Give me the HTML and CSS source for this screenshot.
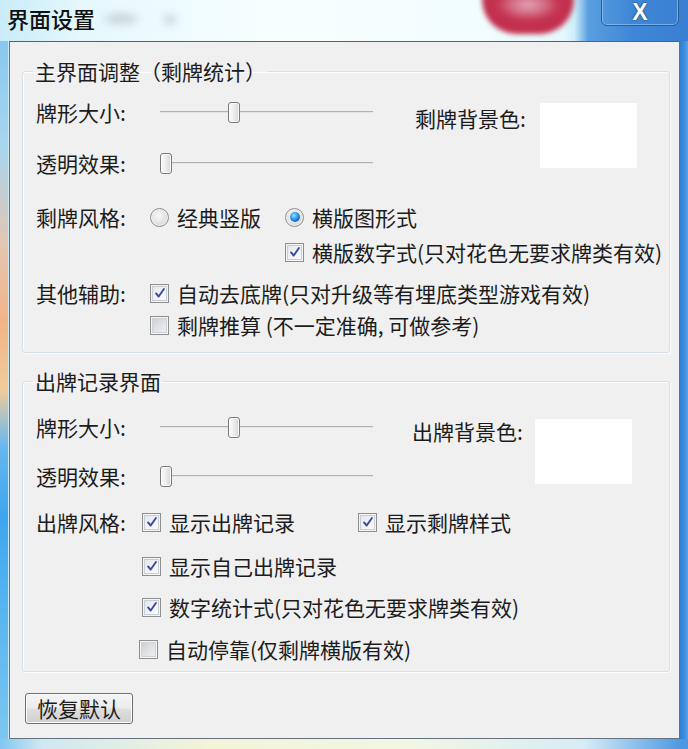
FILE: index.html
```html
<!DOCTYPE html>
<html lang="zh-CN">
<head>
<meta charset="utf-8">
<title>界面设置</title>
<link rel="stylesheet" href="styles.css">
</head>
<body>
<div class="window">
  <div class="titlebar">
    <span class="title">界面设置</span>
    <span class="smudge smudge-a"></span>
    <span class="smudge smudge-b"></span>
    <span class="red-btn"></span>
    <span class="close-btn"><span class="close-x">X</span></span>
  </div>
  <div class="frame">
    <div class="edge-left"></div>
    <div class="client">
      <fieldset class="group group-main">
        <legend>主界面调整（剩牌统计）</legend>
        <div class="top top-main">
          <div class="sliders">
            <div class="slider-row">
              <span class="lbl">牌形大小:</span>
              <div class="slider"><span class="thumb" style="left:68px"></span></div>
            </div>
            <div class="slider-row">
              <span class="lbl">透明效果:</span>
              <div class="slider"><span class="thumb" style="left:0px"></span></div>
            </div>
          </div>
          <span class="bg-lbl">剩牌背景色:</span>
          <div class="swatch"></div>
        </div>
        <div class="opts opts-main">
          <span class="opt-lbl r1">剩牌风格:</span>
          <div class="style-grid r1">
            <span class="opt"><span class="rb"></span>经典竖版</span>
            <span class="opt"><span class="rb rb-on"></span>横版图形式</span>
            <span class="opt sub"><span class="cb"><svg viewBox="0 0 16 16" class="tick"><path d="M3.5 8.5 L6.5 12 L12.5 3.5"/></svg></span>横版数字式(只对花色无要求牌类有效)</span>
          </div>
          <span class="opt-lbl r3">其他辅助:</span>
          <span class="opt col2 r3"><span class="cb"><svg viewBox="0 0 16 16" class="tick"><path d="M3.5 8.5 L6.5 12 L12.5 3.5"/></svg></span>自动去底牌(只对升级等有埋底类型游戏有效)</span>
          <span class="opt col2 r4"><span class="cb cb-off"></span>剩牌推算 (不一定准确, 可做参考)</span>
        </div>
      </fieldset>

      <fieldset class="group group-record">
        <legend>出牌记录界面</legend>
        <div class="top top-record">
          <div class="sliders">
            <div class="slider-row">
              <span class="lbl">牌形大小:</span>
              <div class="slider"><span class="thumb" style="left:68px"></span></div>
            </div>
            <div class="slider-row">
              <span class="lbl">透明效果:</span>
              <div class="slider"><span class="thumb" style="left:0px"></span></div>
            </div>
          </div>
          <span class="bg-lbl">出牌背景色:</span>
          <div class="swatch"></div>
        </div>
        <div class="opts opts-record">
          <span class="opt-lbl r1">出牌风格:</span>
          <div class="pair col2 r1">
            <span class="opt"><span class="cb"><svg viewBox="0 0 16 16" class="tick"><path d="M3.5 8.5 L6.5 12 L12.5 3.5"/></svg></span>显示出牌记录</span>
            <span class="opt"><span class="cb"><svg viewBox="0 0 16 16" class="tick"><path d="M3.5 8.5 L6.5 12 L12.5 3.5"/></svg></span>显示剩牌样式</span>
          </div>
          <span class="opt col2 r2"><span class="cb"><svg viewBox="0 0 16 16" class="tick"><path d="M3.5 8.5 L6.5 12 L12.5 3.5"/></svg></span>显示自己出牌记录</span>
          <span class="opt col2 r3"><span class="cb"><svg viewBox="0 0 16 16" class="tick"><path d="M3.5 8.5 L6.5 12 L12.5 3.5"/></svg></span>数字统计式(只对花色无要求牌类有效)</span>
          <span class="opt col2 r4 shift"><span class="cb cb-off"></span>自动停靠(仅剩牌横版有效)</span>
        </div>
      </fieldset>

      <button class="btn">恢复默认</button>
    </div>
    <div class="edge-right"></div>
  </div>
  <div class="edge-bottom"></div>
</div>
</body>
</html>
```

FILE: styles.css
```css
html, body {
  margin: 0;
  padding: 0;
}
body {
  width: 688px;
  height: 749px;
  overflow: hidden;
  font-family: "Noto Sans CJK SC", "Noto Sans", sans-serif;
  font-size: 21px;
  color: #1c1c1c;
}
.window {
  width: 688px;
  height: 749px;
  display: flex;
  flex-direction: column;
}

/* title bar */
.titlebar {
  position: relative;
  height: 41px;
  flex: none;
  overflow: hidden;
  background: linear-gradient(to right, #c9ecf8 0%, #e6f8fd 12%, #f7feff 40%, #f2fdff 70%, #e4f8fe 82%, #cdeefa 83.5%, #5a9fe0 85.5%, #3f86d6 92%, #3a80d2 100%);
}
.title {
  position: absolute;
  left: 7px;
  top: 4px;
  font-size: 22px;
  line-height: 28px;
  font-weight: 500;
  color: #111;
}
.smudge {
  position: absolute;
  border-radius: 50%;
  background: #a9b3bb;
  filter: blur(4px);
  opacity: 0.55;
}
.smudge-a { left: 104px; top: 14px; width: 34px; height: 10px; }
.smudge-b { left: 163px; top: 15px; width: 14px; height: 9px; }
.red-btn {
  position: absolute;
  left: 482px;
  top: -8px;
  width: 92px;
  height: 42px;
  border-radius: 10px 10px 46px 46px;
  background: radial-gradient(ellipse 40% 45% at 50% 30%, #e2a2b2 0%, #d47088 45%, #c63a56 80%, #c2304e 100%);
  filter: blur(2.5px);
}
.close-btn {
  position: absolute;
  left: 601px;
  top: -5px;
  width: 78px;
  height: 31px;
  box-sizing: border-box;
  border: 1px solid #2c5c98;
  border-radius: 6px;
  box-shadow: inset 0 0 0 1px rgba(190, 225, 255, 0.45);
  display: flex;
  justify-content: center;
  align-items: center;
}
.close-x {
  font-family: "Liberation Sans", sans-serif;
  font-weight: bold;
  font-size: 23px;
  line-height: 22px;
  color: #fff;
  margin-top: 3px;
  text-shadow: 0 0 2px #1d3f70, 0 0 1px #1d3f70;
}

/* frame */
.frame {
  display: flex;
  flex: none;
  height: 698px;
}
.edge-left {
  width: 9px;
  background: linear-gradient(to bottom, #86c8ee 0%, #a8d6ee 15%, #e6c4ae 30%, #f2b486 40%, #f0cc9a 50%, #68b8ee 58%, #3ea6ee 68%, #58b6ee 82%, #7ec6f0 100%);
  box-shadow: inset -1px 0 0 #c8e6f6;
}
.edge-right {
  width: 8px;
  background: linear-gradient(to right, #2f7fd2, #3f90e0 60%, #5aa2e6);
}
.edge-bottom {
  height: 10px;
  background: linear-gradient(to right, #7ec6f0 0%, #cfe8f2 6%, #f3f4d8 30%, #f2f6e4 60%, #d6ecf6 85%, #4c98e2 99%);
}
.client {
  width: 671px;
  height: 698px;
  box-sizing: border-box;
  border: 1px solid #66737f;
  border-top-color: #55616d;
  background: #f0f0f0;
  padding: 17px 9px 0 12px;
}

/* group boxes */
.group {
  margin: 0;
  border: 1px solid #d5dfe5;
  border-radius: 3px;
  padding: 0 0 14px 13px;
  box-shadow: inset 1px 1px 0 #fbfbfb, 1px 1px 0 #fbfbfb;
  min-width: 0;
}
.group legend {
  padding: 0 2px;
  margin-left: -3px;
  line-height: 24px;
  height: 24px;
}
.group-record {
  margin-top: 16px;
  padding-bottom: 9px;
}

.lbl, .opt-lbl, .bg-lbl {
  line-height: 26px;
  height: 26px;
  white-space: nowrap;
}

/* slider section */
.top {
  display: flex;
  align-items: flex-start;
}
.top-main { margin-top: 16px; }
.top-record { margin-top: 21px; }
.sliders {
  display: flex;
  flex-direction: column;
}
.slider-row {
  display: flex;
  align-items: center;
  height: 26px;
}
.slider-row + .slider-row { margin-top: 25px; }
.top-record .slider-row + .slider-row { margin-top: 23px; }
.slider-row .lbl { width: 124px; }
.slider {
  position: relative;
  width: 213px;
  height: 26px;
}
.slider::before {
  content: "";
  position: absolute;
  left: 0;
  right: 0;
  top: 12px;
  height: 1px;
  background: #e4e4e4;
  border-top: 1px solid #b2b2b2;
}
.thumb {
  position: absolute;
  top: 3px;
  width: 12px;
  height: 21px;
  box-sizing: border-box;
  border: 1px solid #777b80;
  border-radius: 3px;
  background: linear-gradient(to right, #fdfdfd 0%, #ececec 50%, #d6d6d6 100%);
  box-shadow: inset 0 0 0 1px #fafafa;
}
.bg-lbl {
  margin-left: 42px;
  margin-top: 6px;
}
.swatch {
  width: 97px;
  height: 65px;
  background: #fff;
  margin-left: 14px;
  margin-top: 4px;
}
.top-record .bg-lbl {
  margin-left: 39px;
  margin-top: 4px;
}
.top-record .swatch {
  margin-left: 12px;
  margin-top: 5px;
}

/* options */
.opts {
  display: grid;
  align-items: start;
  justify-content: start;
}
.opts-main {
  margin-top: 28px;
  grid-template-columns: 114px auto;
  grid-template-rows: 35px 41px 32px 26px;
}
.opts-record {
  margin-top: 20px;
  grid-template-columns: 106px auto;
  grid-template-rows: 44px 41px 42px 26px;
}
.opt-lbl { grid-column: 1; }
.col2 { grid-column: 2; }
.r1 { grid-row: 1; }
.r2 { grid-row: 2; }
.r3 { grid-row: 3; }
.r4 { grid-row: 4; }
.style-grid {
  grid-column: 2;
  grid-row: 1 / span 2;
  display: grid;
  grid-template-columns: auto auto;
  grid-template-rows: 35px 26px;
  justify-content: start;
  align-items: start;
  column-gap: 24px;
}
.style-grid .sub { grid-column: 2; }
.pair {
  display: grid;
  grid-template-columns: 216px auto;
  align-items: start;
}
.opt {
  display: flex;
  align-items: center;
  height: 26px;
  line-height: 26px;
  gap: 8px;
  white-space: nowrap;
}
.shift { margin-left: -3px; }

/* checkbox */
.cb {
  flex: none;
  width: 19px;
  height: 19px;
  box-sizing: border-box;
  border: 1px solid #8e8f8f;
  background: linear-gradient(135deg, #dfe3ea 0%, #f4f5f8 60%, #fbfbfc 100%);
  box-shadow: inset 0 0 0 1px #f4f4f4, inset 0 0 0 2px #c9ced6;
  display: flex;
  align-items: center;
  justify-content: center;
}
.cb-off {
  background: linear-gradient(135deg, #c7cacf 0%, #e2e3e5 55%, #f2f2f2 100%);
  box-shadow: inset 0 0 0 1px #f6f6f6, inset 0 0 0 2px #d0d2d5;
}
.tick {
  width: 14px;
  height: 14px;
}
.tick path {
  fill: none;
  stroke: #3a4aa0;
  stroke-width: 2.2;
  stroke-linecap: round;
  stroke-linejoin: round;
}

/* radio */
.rb {
  flex: none;
  width: 19px;
  height: 19px;
  box-sizing: border-box;
  border-radius: 50%;
  border: 1px solid #8e8f8f;
  background: radial-gradient(circle at 45% 40%, #f7f7f7 0%, #e6e6e6 45%, #c9cacc 100%);
  box-shadow: inset 0 0 0 1px #f3f3f3;
  display: flex;
  align-items: center;
  justify-content: center;
}
.rb-on::after {
  content: "";
  width: 10px;
  height: 10px;
  border-radius: 50%;
  background: radial-gradient(circle at 40% 35%, #9ee0ff 0%, #39a4ee 35%, #1660c0 75%, #0e4192 100%);
}

/* button */
.btn {
  display: block;
  margin: 21px 0 0 3px;
  width: 108px;
  height: 31px;
  padding: 0;
  box-sizing: border-box;
  border: 1px solid #707070;
  border-radius: 3px;
  background: linear-gradient(#f4f4f4 0%, #ececec 48%, #dedede 52%, #d0d0d0 100%);
  box-shadow: inset 0 0 0 1px #fbfbfb;
  font-family: "Noto Sans CJK SC", "Noto Sans", sans-serif;
  font-size: 21px;
  line-height: 27px;
  color: #1c1c1c;
}
```
